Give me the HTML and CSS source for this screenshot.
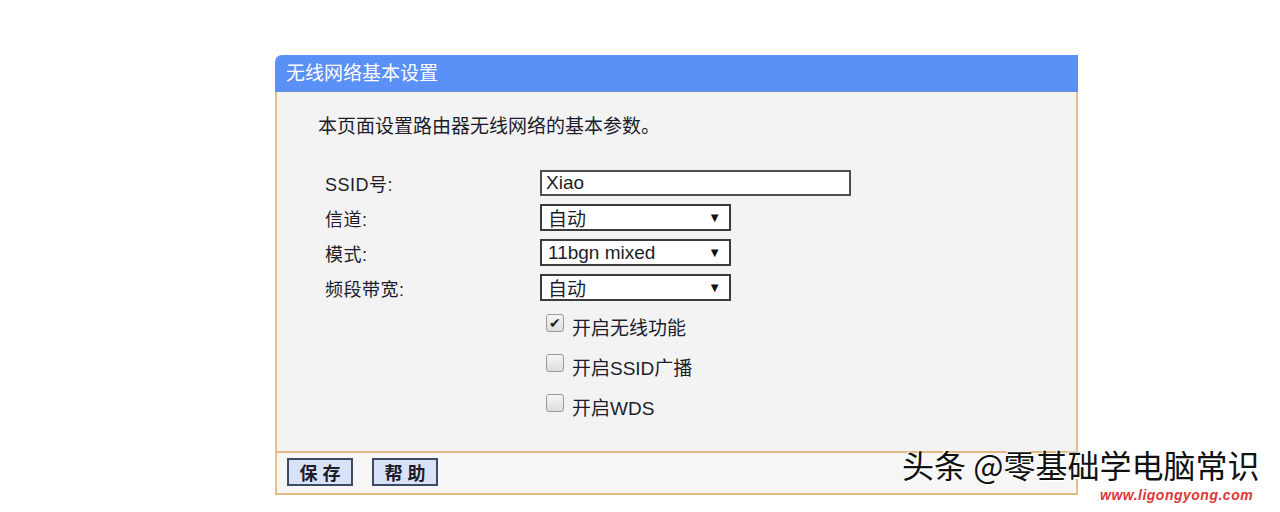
FILE: index.html
```html
<!DOCTYPE html>
<html>
<head>
    <title>无线网络基本设置</title>
    <link rel="stylesheet" href="styles.css">
</head>
<body>
    <div class="panel">
        <!-- Title bar -->
        <div class="panel-title">无线网络基本设置</div>

        <!-- Settings body -->
        <div class="panel-body">
            <p class="intro">本页面设置路由器无线网络的基本参数。</p>

            <div class="form-grid">
                <div class="label">SSID号:</div>
                <div class="text-field">Xiao</div>

                <div class="label">信道:</div>
                <div class="select-field"><span>自动</span><span class="arrow">▼</span></div>

                <div class="label">模式:</div>
                <div class="select-field"><span>11bgn mixed</span><span class="arrow">▼</span></div>

                <div class="label">频段带宽:</div>
                <div class="select-field"><span>自动</span><span class="arrow">▼</span></div>
            </div>

            <div class="check-list">
                <div class="check-row"><span class="check-box checked">✔</span>开启无线功能</div>
                <div class="check-row"><span class="check-box"></span>开启SSID广播</div>
                <div class="check-row"><span class="check-box"></span>开启WDS</div>
            </div>
        </div>

        <!-- Buttons -->
        <div class="panel-footer">
            <button class="btn">保存</button>
            <button class="btn">帮助</button>
        </div>
    </div>

    <div class="watermark">头条 @零基础学电脑常识</div>
    <div class="site">www.ligongyong.com</div>
</body>
</html>
```

FILE: styles.css
```css
body {
    margin: 0;
    background: #ffffff;
    font-family: "Liberation Sans", "Noto Sans CJK SC", sans-serif;
    color: #1c1c2c;
}

/* Main settings panel */
.panel {
    width: 803px;
    margin: 55px 0 0 275px;
}

.panel-title {
    height: 37px;
    line-height: 37px;
    padding-left: 11px;
    background: #5b90f6;
    border-bottom: 1px solid #6c8fd0;
    border-radius: 7px 0 0 0;
    color: #ffffff;
    font-size: 19px;
    box-sizing: border-box;
}

.panel-body {
    height: 361px;
    box-sizing: border-box;
    background: #f3f3f3;
    border-left: 2px solid #e6c08c;
    border-right: 2px solid #e6c08c;
    border-bottom: 2px solid #e2b982;
    padding: 23px 0 0 41px;
}

.intro {
    margin: 0 0 30px 0;
    font-size: 19px;
    line-height: 24px;
}

/* Form rows */
.form-grid {
    display: grid;
    grid-template-columns: 215px auto;
    grid-auto-rows: 27px;
    row-gap: 8px;
    align-items: center;
    padding-left: 7px;
}

.label {
    font-size: 18px;
    letter-spacing: 0.5px;
}

.text-field {
    width: 311px;
    height: 26px;
    box-sizing: border-box;
    border: 2px solid #4e4e4e;
    background: #ffffff;
    padding-left: 4px;
    font-size: 19px;
    line-height: 22px;
}

.select-field {
    width: 191px;
    height: 27px;
    box-sizing: border-box;
    border: 2px solid #3c3c3c;
    background: #ffffff;
    display: flex;
    justify-content: space-between;
    align-items: center;
    padding: 0 8px 0 6px;
    font-size: 19px;
}

.select-field .arrow {
    font-size: 13px;
    color: #111111;
}

/* Checkbox options */
.check-list {
    display: flex;
    flex-direction: column;
    gap: 22px;
    padding: 16px 0 0 228px;
}

.check-row {
    display: flex;
    align-items: center;
    gap: 8px;
    font-size: 19px;
    height: 18px;
}

.check-box {
    width: 16px;
    height: 16px;
    border: 1px solid #9a9a9a;
    border-radius: 3px;
    background: linear-gradient(#f6f6f6, #dcdcdc);
    font-size: 14px;
    line-height: 16px;
    text-align: center;
    color: #222222;
    margin-top: -6px;
}

/* Footer buttons */
.panel-footer {
    height: 42px;
    box-sizing: border-box;
    background: #f6f6f6;
    border-left: 2px solid #e6c08c;
    border-right: 2px solid #e6c08c;
    border-bottom: 2px solid #e2b982;
    display: flex;
    align-items: flex-start;
    gap: 19px;
    padding: 5px 0 0 10px;
}

.btn {
    width: 66px;
    height: 28px;
    padding: 0;
    border: 2px solid #3c4a66;
    background: #d8e2f6;
    font-family: "Noto Sans CJK SC", sans-serif;
    font-size: 18px;
    font-weight: bold;
    letter-spacing: 5px;
    text-indent: 5px;
    line-height: 22px;
    color: #1c1c2c;
}

/* Overlay watermark */
.watermark {
    position: absolute;
    left: 902px;
    top: 446px;
    font-family: "Noto Sans CJK SC", sans-serif;
    font-size: 32px;
    line-height: 36px;
    color: #111111;
    text-shadow: 2px 2px 0 #ffffff, -1px -1px 0 #ffffff;
    white-space: nowrap;
}

.site {
    position: absolute;
    left: 1100px;
    top: 488px;
    font-family: "Liberation Sans", sans-serif;
    font-size: 14px;
    line-height: 15px;
    font-weight: bold;
    font-style: italic;
    color: #e0353a;
    letter-spacing: 0.5px;
}
```
